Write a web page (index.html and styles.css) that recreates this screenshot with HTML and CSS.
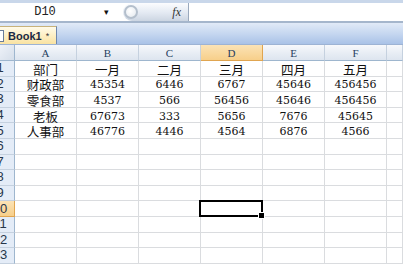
FILE: index.html
```html
<!DOCTYPE html>
<html lang="zh-CN">
<head>
<meta charset="UTF-8">
<title>Book1</title>
<link rel="stylesheet" href="styles.css">
</head>
<body>

<!-- Formula bar -->
<div class="top-strip"></div>
<div class="formula-bar">
  <div class="name-box">D10</div>
  <div class="name-arrow">&#9662;</div>
  <div class="fx-button">
    <span class="fx-knob"></span>
    <span class="fx">fx</span>
  </div>
  <div class="formula-input"></div>
</div>
<div class="bar-line"></div>

<!-- Workbook tabs -->
<div class="tab-bar">
  <div class="tab">
    <span class="tab-icon"></span>
    <span class="tab-name">Book1</span>
    <span class="tab-star">*</span>
  </div>
</div>

<!-- Sheet grid -->
<div class="sheet" id="sheet"></div>

<script>
  const cols = ['A', 'B', 'C', 'D', 'E', 'F', ''];
  const data = [
    ['部门', '一月', '二月', '三月', '四月', '五月'],
    ['财政部', '45354', '6446', '6767', '45646', '456456'],
    ['零食部', '4537', '566', '56456', '45646', '456456'],
    ['老板', '67673', '333', '5656', '7676', '45645'],
    ['人事部', '46776', '4446', '4564', '6876', '4566']
  ];
  const sheet = document.getElementById('sheet');

  function cell(cls, text) {
    const div = document.createElement('div');
    div.className = cls;
    if (text) div.innerHTML = text;
    sheet.appendChild(div);
    return div;
  }

  // header row
  cell('corner');
  cols.forEach(c => cell('col-head' + (c === 'D' ? ' active' : ''), c));

  for (let r = 1; r <= 13; r++) {
    cell('row-head' + (r === 10 ? ' active' : ''), '<span>' + r + '</span>');
    for (let c = 0; c < cols.length; c++) {
      const row = data[r - 1];
      const text = row && row[c] ? row[c] : '';
      const div = cell('cell' + (/^\d/.test(text) ? ' num' : ''), text);
      if (r === 10 && c === 3) div.classList.add('selected');
    }
  }
</script>

</body>
</html>
```

FILE: styles.css
```css
body {
  margin: 0;
  background: #fff;
  font-family: "Liberation Sans", Arial, sans-serif;
  overflow: hidden;
}

/* Formula bar */
.top-strip {
  height: 3px;
  background: #c9d7ea;
}

.formula-bar {
  height: 18px;
  display: flex;
  align-items: center;
  background: #fff;
}

.name-box {
  width: 90px;
  text-align: center;
  font-family: "Liberation Mono", monospace;
  font-size: 12px;
  color: #222;
}

.name-arrow {
  width: 33px;
  font-size: 9px;
  text-align: center;
  color: #111;
}

.fx-button {
  width: 66px;
  height: 18px;
  display: flex;
  align-items: center;
  justify-content: space-between;
  box-sizing: border-box;
  border-radius: 9px 0 0 9px;
  background: linear-gradient(#fbfcfe, #e3e9f2 55%, #ccd5e2);
  border-right: 1px solid #9aa9bd;
}

.fx-knob {
  width: 14px;
  height: 14px;
  margin-left: 1px;
  border-radius: 50%;
  box-sizing: border-box;
  border: 2px solid #b4bfcc;
  background: radial-gradient(circle at 40% 40%, #fff, #e3e8ee);
}

.fx {
  font-family: "Liberation Serif", serif;
  font-style: italic;
  font-size: 12px;
  margin-right: 7px;
  color: #333;
}

.formula-input {
  flex: 1;
  height: 18px;
  background: #fff;
}

.bar-line {
  height: 2px;
  background: #a5b6cc;
}

/* Workbook tabs */
.tab-bar {
  height: 22px;
  display: flex;
  align-items: flex-end;
  background: linear-gradient(#e1eaf7, #c6d7f0 50%, #a9c2e7);
  border-bottom: 1px solid #9db3d4;
  box-sizing: border-box;
}

.tab {
  width: 57px;
  height: 18px;
  display: flex;
  align-items: center;
  box-sizing: border-box;
  border-right: 1px solid #6f87ad;
  border-top: 1px solid #c7b27a;
  background: linear-gradient(#fffbe9, #fdeec1 55%, #f9e2a2);
}

.tab-icon {
  width: 3px;
  height: 10px;
  border: 1px solid #6a7c99;
  border-left: none;
  background: #fff;
  margin-right: 4px;
}

.tab-name {
  font-weight: bold;
  font-size: 11px;
  color: #1a2a44;
}

.tab-star {
  font-size: 9px;
  margin-left: 4px;
  color: #333;
}

/* Sheet grid */
.sheet {
  display: grid;
  grid-template-columns: 15px repeat(6, 62px) 16px;
  grid-template-rows: 16px repeat(13, 15.6px);
}

.corner {
  background: linear-gradient(135deg, #eef2f8, #d5deea);
  border-right: 1px solid #9eb6ce;
  border-bottom: 1px solid #9eb6ce;
}

.col-head {
  display: flex;
  align-items: center;
  justify-content: center;
  font-family: "Liberation Serif", serif;
  font-size: 11px;
  color: #27415f;
  background: linear-gradient(#f7f9fc, #e9eef5 50%, #dde5ef);
  border-right: 1px solid #c5d1df;
  border-bottom: 1px solid #9eb6ce;
}

.row-head {
  overflow: hidden;
  display: flex;
  align-items: center;
  font-size: 13px;
  line-height: 14px;
  color: #27364a;
  background: #e4ecf7;
  border-right: 1px solid #9eb6ce;
  border-bottom: 1px solid #c5d1df;
}

.row-head span {
  flex: none;
  width: 28px;
  margin-left: -14px;
  text-align: center;
}

.col-head.active,
.row-head.active {
  background: linear-gradient(#fbe3b6, #f7cf8a);
  border-color: #e0a550;
}

.cell {
  display: flex;
  align-items: center;
  justify-content: center;
  padding-top: 2px;
  box-sizing: border-box;
  font-family: "Noto Sans CJK SC", sans-serif;
  font-size: 12.5px;
  line-height: 13px;
  color: #111;
  border-right: 1px solid #dadcdf;
  border-bottom: 1px solid #dadcdf;
}

.cell.num {
  font-family: "DejaVu Serif", serif;
  font-size: 11px;
}

.cell.selected {
  position: relative;
}

.cell.selected::after {
  content: "";
  position: absolute;
  left: -2px;
  top: -1px;
  right: -1px;
  bottom: -1px;
  border: 2px solid #000;
}

.cell.selected::before {
  content: "";
  position: absolute;
  right: -3px;
  bottom: -3px;
  width: 5px;
  height: 5px;
  background: #000;
  border: 1px solid #fff;
  z-index: 1;
}
```
